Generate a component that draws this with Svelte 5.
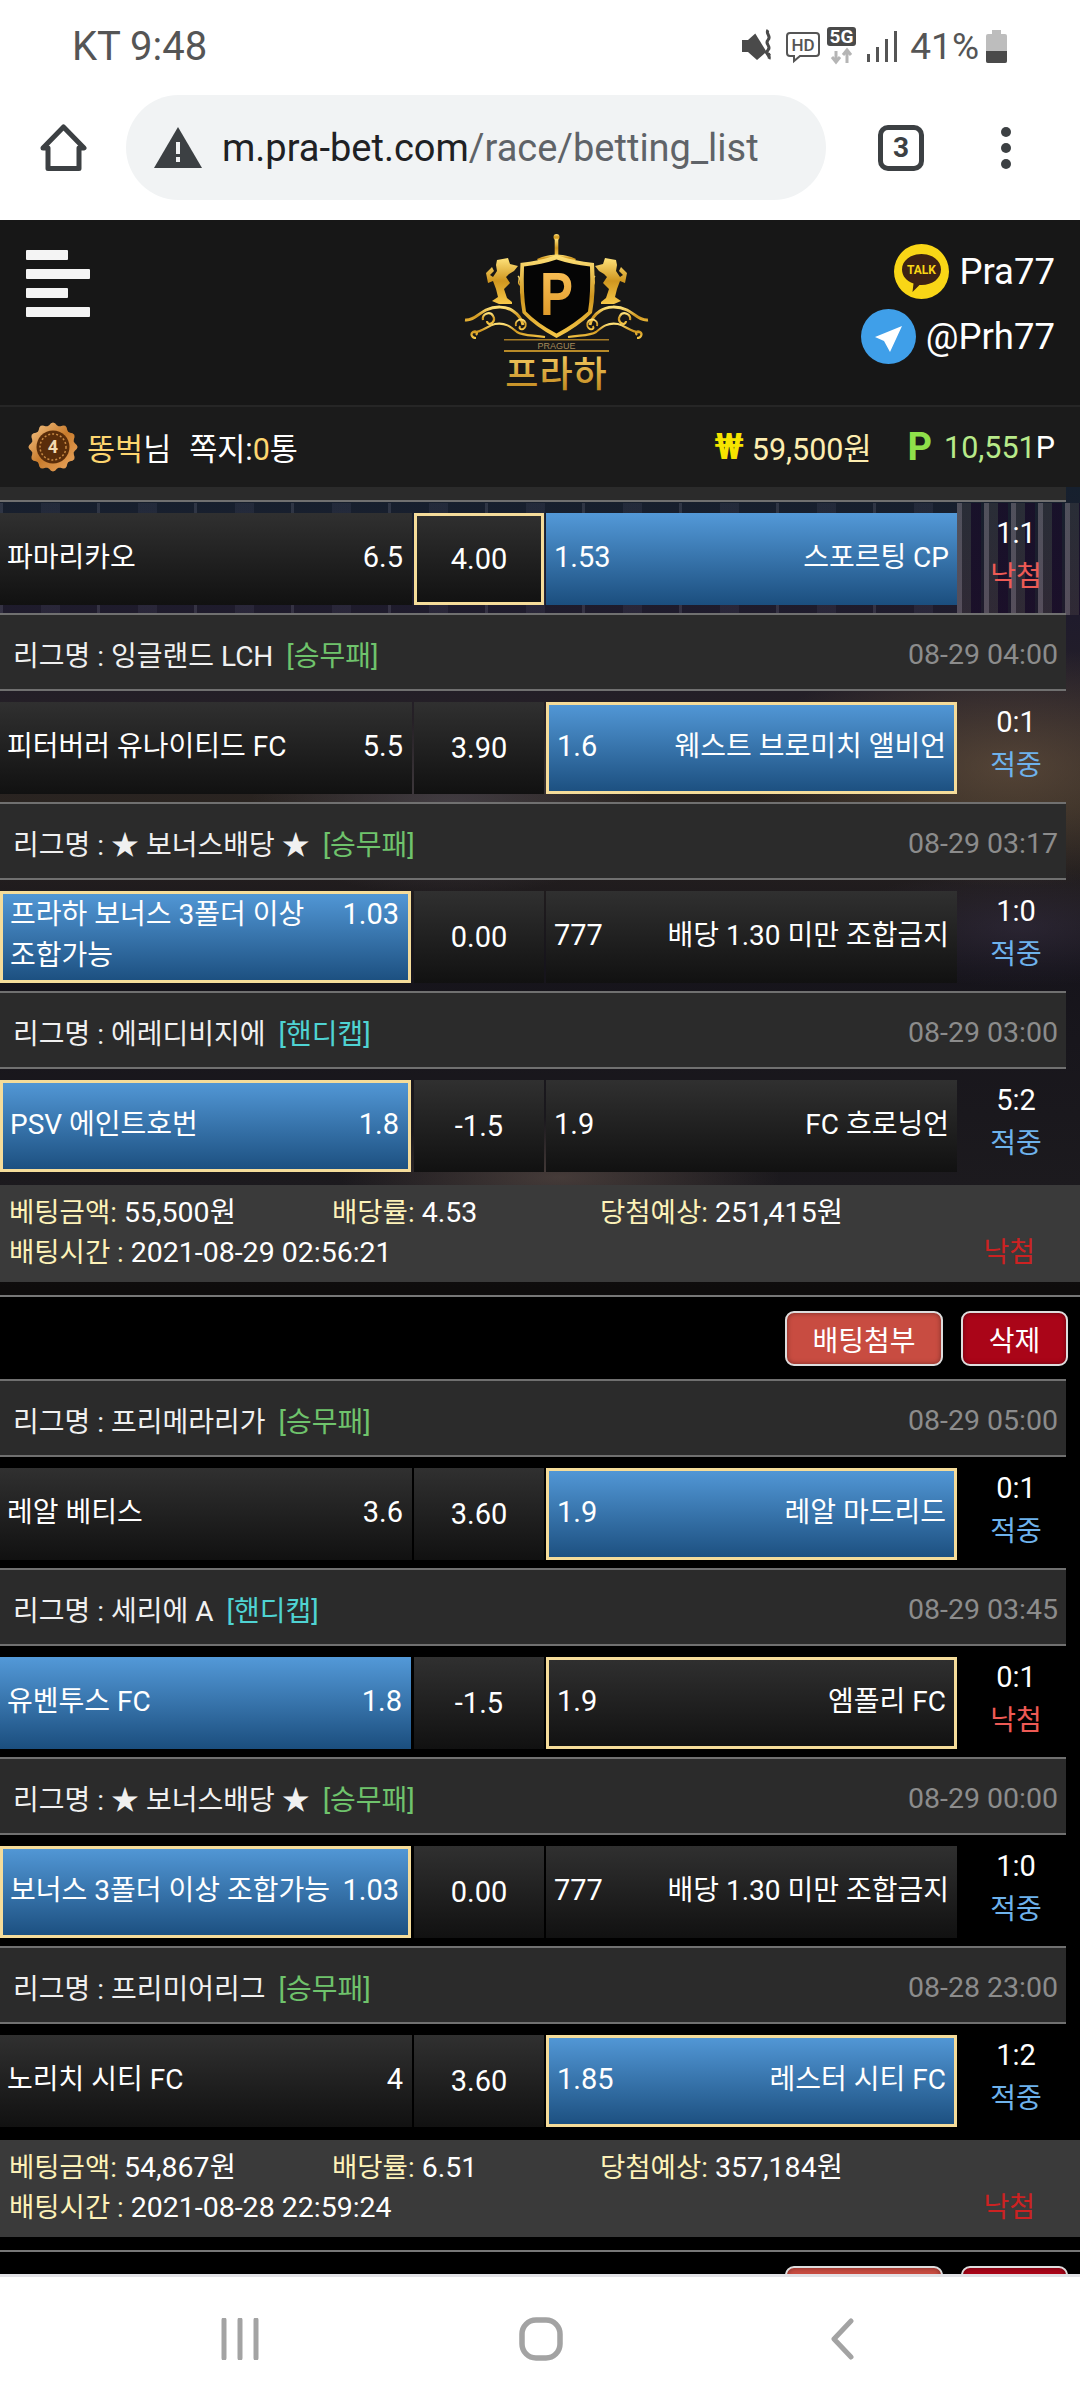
<script>
    const groups = [
        {
            stub: true,
            matches: [
                { home: "파마리카오", homeOdds: "6.5", mid: "4.00", awayOdds: "1.53", away: "스포르팅 CP", score: "1:1", result: "낙첨", blue: "away", gold: "mid" },
                { league: "잉글랜드 LCH", type: "승무패", date: "08-29 04:00", home: "피터버러 유나이티드 FC", homeOdds: "5.5", mid: "3.90", awayOdds: "1.6", away: "웨스트 브로미치 앨비언", score: "0:1", result: "적중", blue: "away", gold: "away" },
                { league: "★ 보너스배당 ★", type: "승무패", date: "08-29 03:17", home: "프라하 보너스 3폴더 이상", home2: "조합가능", homeOdds: "1.03", mid: "0.00", awayOdds: "777", away: "배당 1.30 미만 조합금지", score: "1:0", result: "적중", blue: "home", gold: "home" },
                { league: "에레디비지에", type: "핸디캡", date: "08-29 03:00", home: "PSV 에인트호번", homeOdds: "1.8", mid: "-1.5", awayOdds: "1.9", away: "FC 흐로닝언", score: "5:2", result: "적중", blue: "home", gold: "home" },
            ],
            amount: "55,500원",
            rate: "4.53",
            expect: "251,415원",
            time: "2021-08-29 02:56:21",
        },
        {
            buttons: true,
            matches: [
                { league: "프리메라리가", type: "승무패", date: "08-29 05:00", home: "레알 베티스", homeOdds: "3.6", mid: "3.60", awayOdds: "1.9", away: "레알 마드리드", score: "0:1", result: "적중", blue: "away", gold: "away" },
                { league: "세리에 A", type: "핸디캡", date: "08-29 03:45", home: "유벤투스 FC", homeOdds: "1.8", mid: "-1.5", awayOdds: "1.9", away: "엠폴리 FC", score: "0:1", result: "낙첨", blue: "home", gold: "away" },
                { league: "★ 보너스배당 ★", type: "승무패", date: "08-29 00:00", home: "보너스 3폴더 이상 조합가능", homeOdds: "1.03", mid: "0.00", awayOdds: "777", away: "배당 1.30 미만 조합금지", score: "1:0", result: "적중", blue: "home", gold: "home" },
                { league: "프리미어리그", type: "승무패", date: "08-28 23:00", home: "노리치 시티 FC", homeOdds: "4", mid: "3.60", awayOdds: "1.85", away: "레스터 시티 FC", score: "1:2", result: "적중", blue: "away", gold: "away" },
            ],
            amount: "54,867원",
            rate: "6.51",
            expect: "357,184원",
            time: "2021-08-28 22:59:24",
        },
        { buttons: true, matches: [] },
    ];

    // scalloped edge of the level medal
    let medalEdge = "";
    for (let i = 0; i < 72; i++) {
        const a = (i / 72) * Math.PI * 2;
        const r = 23 + 1.6 * Math.cos(a * 12);
        medalEdge += (i ? "L" : "M") + (25 + r * Math.sin(a)).toFixed(2) + " " + (25 - r * Math.cos(a)).toFixed(2);
    }
    medalEdge += "Z";
</script>

<div class="screen">
    <div class="status">
        <span class="clock">KT 9:48</span>
        <svg class="status-icons" width="156" height="40" viewBox="0 0 156 40">
            <path d="M1 14h6l9-8 14 23-3 2-3-4-8 7-9-8H1z" fill="#4a4a4a" />
            <path d="M12 1l16 26" stroke="#fff" stroke-width="3" />
            <path d="M27 4c-3 4 4 6 0 10s4 6 0 10 3 5 1 9" fill="none" stroke="#4a4a4a" stroke-width="3" />
            <path d="M49 7h26q3 0 3 3v17q0 3-3 3H59l-6 5v-5h-4q-3 0-3-3V10q0-3 3-3z" fill="none" stroke="#555" stroke-width="2" />
            <text x="62" y="25" class="hd">HD</text>
            <rect x="86" y="1" width="29" height="19" rx="3" fill="#4a4a4a" />
            <text x="100.500" y="17" class="fiveg">5G</text>
            <path d="M95 36v-11M91 31l4 5 4-5" fill="none" stroke="#b5b5b5" stroke-width="3" />
            <path d="M106 37v-12M102 29l4-5 4 5" fill="none" stroke="#b5b5b5" stroke-width="3" />
            <rect x="126" y="28" width="3" height="8" fill="#555" />
            <rect x="135" y="21" width="3" height="15" fill="#555" />
            <rect x="144" y="13" width="3" height="23" fill="#555" />
            <rect x="153" y="5" width="3" height="31" fill="#555" />
        </svg>
        <span class="battery-pct">41%</span>
        <svg class="battery" width="21" height="33" viewBox="0 0 21 33">
            <path d="M6 0h9v4h4q2 0 2 2v25q0 2-2 2H2q-2 0-2-2V6q0-2 2-2h4z" fill="#bdbdbd" />
            <path d="M0 21h21v10q0 2-2 2H2q-2 0-2-2z" fill="#4a4a4a" />
        </svg>
    </div>

    <div class="toolbar">
        <svg class="home-icon" width="47" height="47" viewBox="0 0 47 47">
            <path d="M23.500 3 44 24h-5v20.500H8V24H3z" fill="none" stroke="#3c4043" stroke-width="5" stroke-linejoin="round" />
        </svg>
        <div class="omnibox">
            <svg width="48" height="42" viewBox="0 0 48 42">
                <path d="M24 0 48 41H0z" fill="#3c4043" />
                <rect x="22" y="15" width="4" height="12" fill="#f1f3f4" />
                <rect x="22" y="30" width="4" height="5" fill="#f1f3f4" />
            </svg>
            <span class="url"><b>m.pra-bet.com</b>/race/betting_list</span>
        </div>
        <div class="tabs">3</div>
        <svg class="dots" width="14" height="46" viewBox="0 0 14 46">
            <circle cx="7" cy="7" r="5" fill="#3c4043" />
            <circle cx="7" cy="23" r="5" fill="#3c4043" />
            <circle cx="7" cy="39" r="5" fill="#3c4043" />
        </svg>
    </div>

    <header class="site-header">
        <div class="burger">
            <span class="short"></span>
            <span></span>
            <span class="short"></span>
            <span></span>
        </div>
        <svg class="logo" width="220" height="180" viewBox="0 0 220 180">
            <defs>
                <linearGradient id="gold" x1="0" y1="0" x2="0" y2="1">
                    <stop offset="0" stop-color="#ffe27a" />
                    <stop offset="0.5" stop-color="#cf961f" />
                    <stop offset="1" stop-color="#f7c848" />
                </linearGradient>
                <linearGradient id="gold-text" x1="0" y1="0" x2="0" y2="1">
                    <stop offset="0" stop-color="#ffd870" />
                    <stop offset="1" stop-color="#b97f14" />
                </linearGradient>
                <linearGradient id="gold-p" x1="0" y1="0" x2="0" y2="1">
                    <stop offset="0" stop-color="#ffc860" />
                    <stop offset="1" stop-color="#d8901e" />
                </linearGradient>
                <g id="crest-side">
                    <!-- rampant lion -->
                    <path d="M57 40l11-2 2 6 8 2-4 5-5 3-3 3 4 6-6 6 3 9 5 4v2H59l-7-3 6-4-2-8-3-8-5 2-2-10 6-6 2 4-4 4 3 2 4-6-1-6z" fill="url(#gold)" />
                    <!-- scrolls -->
                    <path d="M25 100c8 1 13-6 21-10 9-4 20-4 27 1 6 4 9 9 10 14" fill="none" stroke="url(#gold)" stroke-width="3" />
                    <path d="M43 100a5.500 5.500 0 1 1 9 3c-3 2-5 0-5-2" fill="none" stroke="url(#gold)" stroke-width="2.200" />
                    <path d="M36 118c-4 0-6-4-3-6s5 1 3 3M33 112c8 1 14-6 22-8 10-2 16 3 22 8 6 4 16 3 28 5" fill="none" stroke="url(#gold)" stroke-width="2.200" />
                    <path d="M76 106a5 5 0 1 1 7 3c-3 1-4-1-3-3" fill="none" stroke="url(#gold)" stroke-width="2" />
                    <path d="M78 56c4 3-2 6 2 9s-2 6 2 9" fill="none" stroke="url(#gold)" stroke-width="1.500" />
                </g>
            </defs>
            <circle cx="116.500" cy="17" r="3" fill="url(#gold)" />
            <rect x="114.700" y="19" width="3.600" height="18" fill="url(#gold)" />
            <path d="M97 39q20-9 39 0l-2 3H99z" fill="url(#gold)" />
            <use href="#crest-side" />
            <use href="#crest-side" transform="translate(233 0) scale(-1 1)" />
            <path d="M80 43q20-2 36.500-8 17 6 37.500 8 2 30-2 50-14 14-35.500 25-21-11-34-25-4-20-2-50z" fill="url(#gold)" />
            <path d="M84 46.500q18-2 32.500-7 15 5 33.500 7 1 27-2 45-13 12-31.500 22-19-10-30.500-22-3-18-2-45z" fill="#050505" />
            <text class="logo-p" x="100" y="95" textLength="33" lengthAdjust="spacingAndGlyphs">P</text>
            <rect x="64" y="119" width="105" height="1.500" fill="#a57a24" />
            <text class="logo-prague" x="116.500" y="129">PRAGUE</text>
            <rect x="64" y="130" width="105" height="2" fill="#b88a28" />
            <text class="logo-name" x="116.500" y="167">프라하</text>
        </svg>
        <div class="contacts">
            <div class="contact">
                <svg width="55" height="55" viewBox="0 0 55 55">
                    <circle cx="27.500" cy="27.500" r="27.500" fill="#f9d616" />
                    <path d="M27.500 10c11 0 19.500 6.500 19.500 15.500S38.500 41 27.500 41l-2 0-7 7 1-8.500C12.500 37 8 32 8 25.500 8 16.500 16.500 10 27.500 10z" fill="#3d2113" />
                    <text class="talk" x="27.500" y="30">TALK</text>
                </svg>
                <span>Pra77</span>
            </div>
            <div class="contact">
                <svg width="55" height="55" viewBox="0 0 55 55">
                    <circle cx="27.500" cy="27.500" r="27.500" fill="#3f9fe9" />
                    <path d="M41 17 14 28l9 4 6 11z" fill="#fff" />
                </svg>
                <span>@Prh77</span>
            </div>
        </div>
    </header>

    <div class="user-bar">
        <svg class="medal" width="50" height="50" viewBox="0 0 50 50">
            <defs>
                <linearGradient id="copper" x1="0" y1="0" x2="1" y2="1">
                    <stop offset="0" stop-color="#f7c78a" />
                    <stop offset="0.5" stop-color="#c87b2c" />
                    <stop offset="1" stop-color="#f0ac66" />
                </linearGradient>
            </defs>
            <path d={medalEdge} fill="url(#copper)" />
            <circle cx="25" cy="25" r="16.500" fill="#5a2d0a" />
            <circle cx="25" cy="25" r="13" fill="none" stroke="#c98a44" stroke-width="1.500" stroke-dasharray="2 2" />
            <text class="medal-num" x="25" y="31">4</text>
        </svg>
        <span class="nick">똥벅</span><span>님</span>
        <span class="note">쪽지:<em>0</em>통</span>
        <div class="wallet">
            <span class="won-mark">₩</span>
            <span class="money">59,500원</span>
            <span class="point-mark">P</span>
            <span class="points">10,551<i>P</i></span>
        </div>
    </div>

    <main class="list">
        {#each groups as group, g}
            <section class="group" class:city={g === 0}>
                {#if group.buttons}
                    <div class="actions">
                        <button class="attach">배팅첨부</button>
                        <button class="remove">삭제</button>
                    </div>
                {/if}
                {#if group.stub}
                    <div class="league stub"></div>
                {/if}
                {#each group.matches as m}
                    {#if m.league}
                        <div class="league">
                            <span>리그명 : {m.league}</span>
                            <span class="type" class:handi={m.type === "핸디캡"}>[{m.type}]</span>
                            <span class="date">{m.date}</span>
                        </div>
                    {/if}
                    <div class="row">
                        <div class="cell home" class:blue={m.blue === "home"} class:gold={m.gold === "home"}>
                            <div class="line"><span>{m.home}</span><span class="odds">{m.homeOdds}</span></div>
                            {#if m.home2}<div class="line">{m.home2}</div>{/if}
                        </div>
                        <div class="cell mid" class:gold={m.gold === "mid"}>{m.mid}</div>
                        <div class="cell away" class:blue={m.blue === "away"} class:gold={m.gold === "away"}>
                            <div class="line"><span class="odds">{m.awayOdds}</span><span>{m.away}</span></div>
                        </div>
                        <div class="outcome">
                            <span class="score">{m.score}</span>
                            <span class={m.result === "낙첨" ? "lost" : "hit"}>{m.result}</span>
                        </div>
                    </div>
                {/each}
                {#if group.amount}
                    <div class="summary">
                        <div class="sum-line">
                            <span class="sum-a"><em>베팅금액:</em> {group.amount}</span>
                            <span class="sum-b"><em>배당률:</em> {group.rate}</span>
                            <span><em>당첨예상:</em> {group.expect}</span>
                        </div>
                        <div class="sum-line">
                            <span><em>배팅시간 :</em> {group.time}</span>
                            <span class="sum-result">낙첨</span>
                        </div>
                    </div>
                    <div class="group-end"></div>
                {/if}
            </section>
        {/each}
    </main>

    <nav class="navbar">
        <svg width="38" height="42" viewBox="0 0 38 42">
            <path d="M3 2v38M19 2v38M35 2v38" stroke="#a3a3a3" stroke-width="5" stroke-linecap="round" />
        </svg>
        <svg width="44" height="44" viewBox="0 0 44 44">
            <rect x="3" y="3" width="38" height="38" rx="14" fill="none" stroke="#a3a3a3" stroke-width="5.500" />
        </svg>
        <svg width="26" height="42" viewBox="0 0 26 42">
            <path d="M22 3 5 21l17 18" fill="none" stroke="#a3a3a3" stroke-width="5" stroke-linecap="round" stroke-linejoin="round" />
        </svg>
    </nav>
</div>

<style>
    :global(body) {
        margin: 0;
        background: #fff;
    }

    .screen {
        width: 1080px;
        height: 2400px;
        display: flex;
        flex-direction: column;
        overflow: hidden;
        font-family: Roboto, "Noto Sans CJK KR", sans-serif;
        font-size: 28px;
        color: #fff;
    }

    .status {
        height: 92px;
        flex: none;
        display: flex;
        align-items: center;
        padding-left: 72px;
        box-sizing: border-box;
        color: #555;
    }

    .clock {
        font-size: 40px;
    }

    .status-icons {
        margin-left: auto;
    }

    .battery-pct {
        font-size: 37px;
        margin-left: 13px;
    }

    .battery {
        margin: 0 73px 0 7px;
    }

    .hd {
        font: 500 17px Roboto, sans-serif;
        fill: #555;
        text-anchor: middle;
    }

    .fiveg {
        font: 700 19px Roboto, sans-serif;
        fill: #fff;
        text-anchor: middle;
    }

    .toolbar {
        height: 128px;
        flex: none;
        display: flex;
        align-items: center;
        padding: 0 0 17px 40px;
        box-sizing: border-box;
    }

    .omnibox {
        width: 700px;
        height: 105px;
        margin-left: 39px;
        padding-left: 28px;
        box-sizing: border-box;
        border-radius: 53px;
        background: #f1f3f4;
        display: flex;
        align-items: center;
        gap: 20px;
    }

    .url {
        font-size: 38px;
        color: #5f6368;
    }

    .url b {
        font-weight: 400;
        color: #202124;
    }

    .tabs {
        width: 46px;
        height: 46px;
        margin-left: 52px;
        box-sizing: border-box;
        border: 5px solid #3c4043;
        border-radius: 10px;
        color: #3c4043;
        font-size: 28px;
        font-weight: 700;
        display: flex;
        align-items: center;
        justify-content: center;
    }

    .dots {
        margin-left: 75px;
    }

    .site-header {
        height: 187px;
        flex: none;
        box-sizing: border-box;
        background: #171717;
        display: grid;
        grid-template-columns: 440px 220px 1fr;
        border-bottom: 2px solid #262626;
    }

    .burger {
        display: flex;
        flex-direction: column;
        gap: 9px;
        padding: 30px 0 0 26px;
    }

    .burger span {
        width: 64px;
        height: 10px;
        border-radius: 1px;
        background: #f4f4f4;
    }

    .burger .short {
        width: 42px;
    }

    .logo-p {
        font: 700 62px "Liberation Sans", sans-serif;
        fill: url(#gold-p);
    }

    .logo-prague {
        font: 400 9px "Liberation Sans", sans-serif;
        fill: #a58a5a;
        text-anchor: middle;
    }

    .logo-name {
        font: 500 36px "Noto Sans CJK KR", sans-serif;
        fill: url(#gold-text);
        text-anchor: middle;
        letter-spacing: 1px;
    }

    .contacts {
        display: flex;
        flex-direction: column;
        align-items: flex-end;
        gap: 10px;
        padding: 24px 25px 0 0;
    }

    .contact {
        display: flex;
        align-items: center;
        gap: 10px;
        font-size: 36.500px;
    }

    .talk {
        font: 700 12px Roboto, sans-serif;
        fill: #f9d616;
        text-anchor: middle;
    }

    .user-bar {
        height: 80px;
        flex: none;
        background: #1b1b1b;
        display: flex;
        align-items: center;
        padding: 0 25px 0 28px;
        font-size: 30.500px;
    }

    .medal {
        margin-right: 9px;
    }

    .medal-num {
        font: 700 18px Roboto, sans-serif;
        fill: #f3d9b0;
        text-anchor: middle;
    }

    .nick,
    .note em {
        color: #fdd66f;
        font-style: normal;
    }

    .note {
        margin-left: 18px;
    }

    .wallet {
        margin-left: auto;
        display: flex;
        align-items: center;
    }

    .won-mark {
        color: #f6e400;
        font-weight: 700;
        font-size: 36px;
        margin-right: 8px;
    }

    .money {
        color: #fdedb0;
    }

    .point-mark {
        color: #8fe04a;
        font-weight: 700;
        font-size: 38px;
        margin: 0 12px 0 36px;
    }

    .points {
        color: #b8ea8a;
    }

    .points i {
        color: #fff;
        font-style: normal;
    }

    .list {
        flex: 1;
        min-height: 0;
        overflow: hidden;
        background: #000;
    }

    /* the site's night-city photo, only seen between the rows */
    .group.city {
        background:
            repeating-linear-gradient(90deg, rgba(200, 185, 190, 0.32) 0 5px, rgba(150, 130, 110, 0.14) 5px 14px, rgba(25, 10, 40, 0.65) 14px 24px, transparent 24px 27px) right 16px / 123px 112px no-repeat,
            repeating-linear-gradient(90deg, rgba(170, 170, 190, 0.16) 0 3px, transparent 3px 41px, rgba(120, 120, 150, 0.12) 41px 60px, transparent 60px 97px) left 16px / 957px 112px no-repeat,
            radial-gradient(ellipse 260px 120px at 1010px 280px, rgba(120, 95, 70, 0.55), transparent),
            radial-gradient(ellipse 200px 90px at 450px 320px, rgba(90, 85, 100, 0.5), transparent),
            radial-gradient(ellipse 220px 60px at 560px 690px, rgba(120, 100, 90, 0.45), transparent),
            radial-gradient(ellipse 180px 60px at 1020px 440px, rgba(70, 60, 90, 0.35), transparent),
            linear-gradient(180deg, #16202e 0, #1f1b2c 130px, #2a2420 320px, #16141b 480px, #1c1a1e 700px, #0e0c0c 800px);
    }

    .league {
        width: 1066px;
        height: 78px;
        box-sizing: border-box;
        padding: 4px 8px 0 13px;
        border-top: 2px solid #707070;
        border-bottom: 2px solid #707070;
        background: #2b2b2b;
        display: flex;
        align-items: center;
        color: #f0f0f0;
    }

    .league.stub {
        height: 15px;
        padding: 0;
        border-top: none;
    }

    .type {
        margin-left: 13px;
        color: #6fc36c;
    }

    .type.handi {
        color: #4fd3d3;
    }

    .date {
        margin-left: auto;
        color: #8c8c8c;
        font-size: 28.500px;
    }

    .row {
        display: flex;
        padding: 11px 0 8px;
        align-items: flex-start;
    }

    .cell {
        height: 92px;
        box-sizing: border-box;
        background: linear-gradient(180deg, #303030, #111);
        background-origin: border-box;
        display: flex;
        flex-direction: column;
        justify-content: center;
    }

    .cell.blue {
        background-image: linear-gradient(180deg, #5399d8, #1b4e7e);
    }

    .cell.gold {
        border: 3px solid #f5dc9a;
    }

    .home {
        width: 412px;
        padding: 0 9px 4px 7px;
    }

    .home.blue {
        width: 411px;
        margin-right: 1px;
    }

    .mid {
        width: 130px;
        margin: 0 2px;
        align-items: center;
        font-size: 29px;
    }

    .away {
        width: 411px;
        padding: 0 8px 4px;
    }

    .odds,
    .score {
        font-size: 29px;
    }

    .line {
        display: flex;
        justify-content: space-between;
        line-height: 41px;
        white-space: nowrap;
    }

    .outcome {
        width: 118px;
        margin-top: -2px;
        display: flex;
        flex-direction: column;
        align-items: center;
        line-height: 44px;
    }

    .lost {
        color: #ee5a55;
    }

    .hit {
        color: #6eb2ec;
    }

    .row:has(+ .summary) {
        padding-bottom: 13px;
    }

    .summary {
        height: 97px;
        box-sizing: border-box;
        padding: 8px 9px 0;
        background: #3a3a3a;
        line-height: 40px;
        font-size: 28.500px;
    }

    .summary em {
        font-style: normal;
        font-size: 27.500px;
        color: #fdf2b8;
    }

    .sum-line {
        display: flex;
    }

    .sum-a {
        width: 323px;
    }

    .sum-b {
        width: 268px;
    }

    .sum-result {
        margin: 0 36px 0 auto;
        font-size: 28px;
        color: #cc2222;
    }

    .group-end {
        height: 15px;
        box-sizing: border-box;
        border-bottom: 2px solid #777;
    }

    .actions {
        display: flex;
        justify-content: flex-end;
        gap: 18px;
        padding: 14px 12px 13px 0;
    }

    .actions button {
        height: 55px;
        padding: 0;
        border: 2px solid #ddd;
        border-radius: 9px;
        color: #fff;
        font: inherit;
        box-shadow: inset 0 0 5px rgba(0, 0, 0, 0.4);
    }

    .attach {
        width: 158px;
        background: #c84c41;
    }

    .remove {
        width: 107px;
        background: #aa0518;
    }

    .navbar {
        height: 126px;
        flex: none;
        box-sizing: border-box;
        border-top: 3px solid #e2e2e6;
        background: #fff;
        display: grid;
        grid-template-columns: repeat(3, 301px);
        padding-left: 89px;
        align-items: center;
        justify-items: center;
    }
</style>
